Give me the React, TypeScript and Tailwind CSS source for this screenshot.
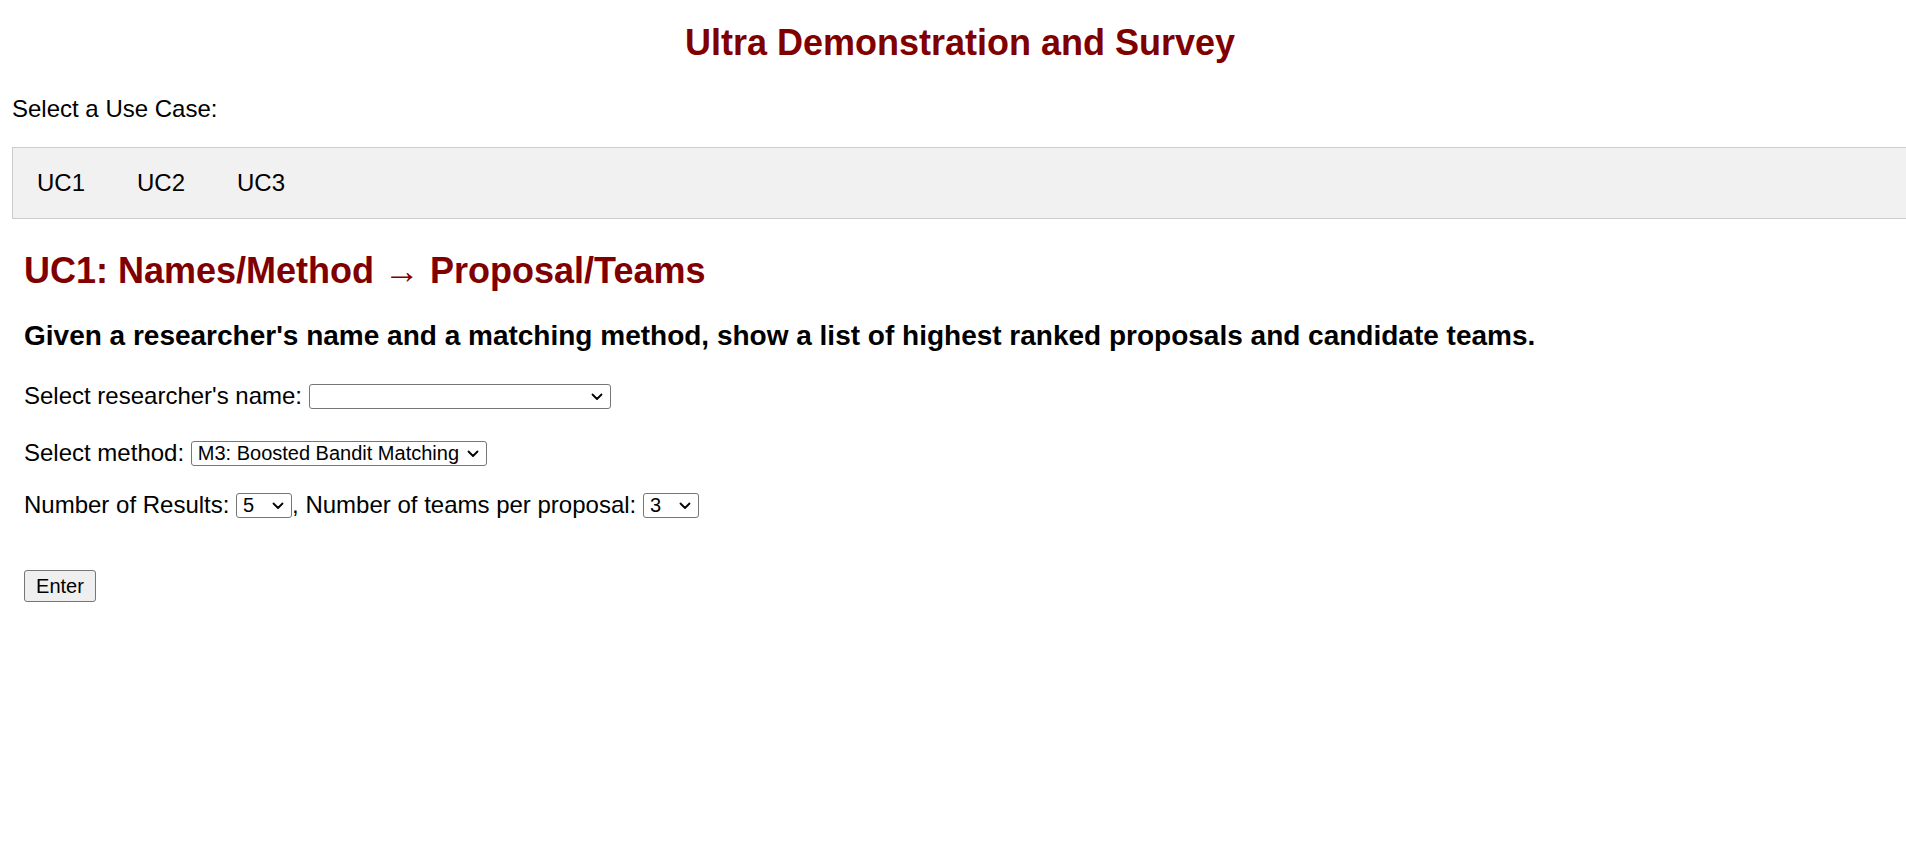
import React from "react";

function Chevron() {
  return (
    <svg
      width="12"
      height="8"
      viewBox="0 0 12 8"
      className="pointer-events-none absolute right-[8px] top-[9px]"
      fill="none"
      stroke="#000"
      strokeWidth="1.8"
      strokeLinecap="round"
      strokeLinejoin="round"
    >
      <path d="M1.5 1.5 L6 6 L10.5 1.5" />
    </svg>
  );
}

function Select({
  widthClass,
  options,
  value,
}: {
  widthClass: string;
  options: string[];
  value: string;
}) {
  return (
    <div className={`relative flex h-[25px] shrink-0 ${widthClass}`}>
      <select
        defaultValue={value}
        className="block h-[25px] w-full appearance-none rounded-[3px] border border-[#767676] bg-white py-0 pl-[6px] pr-[22px] text-[20px] leading-[23px] text-black outline-none"
      >
        {options.map((o) => (
          <option key={o} value={o}>
            {o}
          </option>
        ))}
      </select>
      <Chevron />
    </div>
  );
}

export default function App() {
  return (
    <div className="w-full min-h-screen overflow-hidden bg-white">
      <div
        className="w-[1920px] px-[12px] pt-[22px] text-[24px] text-black"
        style={{ fontFamily: '"Liberation Sans", Arial, sans-serif' }}
      >
        <h2 className="text-center text-[36px] font-bold leading-[41px] text-[#800000]">
          Ultra Demonstration and Survey
        </h2>
        <p className="mt-[32px] leading-[28px]">Select a Use Case:</p>

        <div className="mt-[24px] flex h-[72px] gap-[4px] border border-[#cccccc] bg-[#f1f1f1]">
          <button className="h-[70px] px-[24px] text-[24px] leading-[28px]">UC1</button>
          <button className="h-[70px] px-[24px] text-[24px] leading-[28px]">UC2</button>
          <button className="h-[70px] px-[24px] text-[24px] leading-[28px]">UC3</button>
        </div>

        <div className="px-[12px]">
          <h2 className="mt-[31px] text-[36px] font-bold leading-[41px] text-[#800000]">
            UC1: Names/Method → Proposal/Teams
          </h2>
          <h3 className="mt-[29px] text-[28px] font-bold leading-[32px]">
            Given a researcher's name and a matching method, show a list of highest ranked
            proposals and candidate teams.
          </h3>

          <div className="mt-[30px] flex h-[28px] items-center">
            <span className="whitespace-pre leading-[28px]">Select researcher's name: </span>
            <Select widthClass="w-[302px]" options={[""]} value="" />
          </div>

          <div className="mt-[29px] flex h-[28px] items-center">
            <span className="whitespace-pre leading-[28px]">Select method: </span>
            <Select
              widthClass="w-[296px]"
              options={[
                "M1: Similarity Matching",
                "M2: Bandit Matching",
                "M3: Boosted Bandit Matching",
              ]}
              value="M3: Boosted Bandit Matching"
            />
          </div>

          <div className="mt-[24px] flex h-[28px] items-center">
            <span className="whitespace-pre leading-[28px]">Number of Results: </span>
            <Select widthClass="w-[56px]" options={["1", "3", "5", "10"]} value="5" />
            <span className="whitespace-pre leading-[28px]">, Number of teams per proposal: </span>
            <Select widthClass="w-[56px]" options={["1", "2", "3", "5"]} value="3" />
          </div>

          <button className="mt-[51px] h-[32px] w-[72px] rounded-[3px] border border-[#767676] bg-[#efefef] text-[20px] leading-[23px] text-black">
            Enter
          </button>
        </div>
      </div>
    </div>
  );
}
